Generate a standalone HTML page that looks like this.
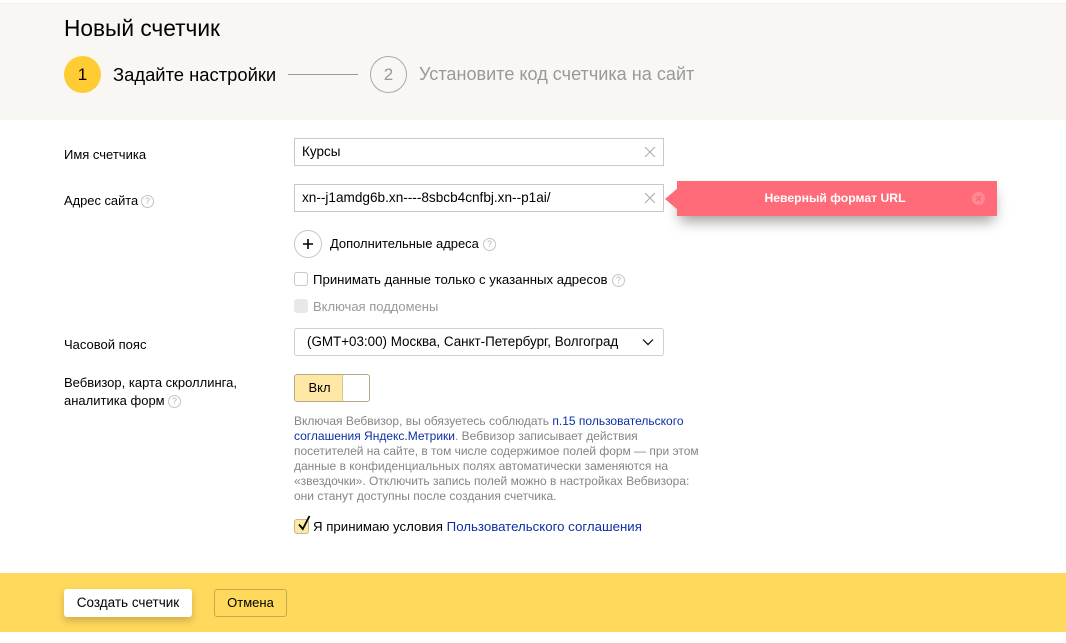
<!DOCTYPE html>
<html lang="ru">
<head>
<meta charset="utf-8">
<title>Новый счетчик</title>
<style>
html,body{margin:0;padding:0;background:#fff;}
body{width:1066px;height:643px;position:relative;overflow:hidden;font-family:"Liberation Sans","Noto Sans CJK SC",sans-serif;color:#000;}
.t{position:absolute;white-space:nowrap;font-size:13px;line-height:16px;}
.box{position:absolute;box-sizing:border-box;}
.q{position:absolute;width:13px;height:13px;box-sizing:border-box;border:1px solid #c4c4c4;border-radius:50%;color:#b5b5b5;font-size:9px;line-height:11px;text-align:center;}
a{color:#0b2fa6;text-decoration:none;}
svg{position:absolute;}
</style>
</head>
<body>
<div class="box" style="left:0;top:3px;width:1066px;height:117px;background:#f8f7f4;border-top:1px solid #eee;"></div>
<div class="t" style="left:64px;top:14px;font-size:22.7px;line-height:28px;">Новый счетчик</div>
<div class="box" style="left:64px;top:56px;width:37px;height:37px;border-radius:50%;background:#ffcc33;"></div>
<div class="t" style="left:64px;top:64px;width:37px;text-align:center;font-size:17px;line-height:21px;">1</div>
<div class="t" style="left:113px;top:64px;font-size:18.4px;line-height:21px;">Задайте настройки</div>
<div class="box" style="left:288px;top:74px;width:70px;height:1px;background:#999;"></div>
<div class="box" style="left:370px;top:56px;width:37px;height:37px;border-radius:50%;border:1px solid #aaa;"></div>
<div class="t" style="left:370px;top:64px;width:37px;text-align:center;font-size:17px;line-height:21px;color:#999;">2</div>
<div class="t" style="left:419px;top:64px;font-size:18.1px;line-height:21px;color:#999;">Установите код счетчика на сайт</div>

<div class="t" style="left:64px;top:147px;">Имя счетчика</div>
<div class="t" style="left:64px;top:193px;font-size:12.9px;">Адрес сайта</div>
<div class="q" style="left:141px;top:195px;">?</div>
<div class="t" style="left:64px;top:337px;">Часовой пояс</div>
<div class="t" style="left:64px;top:375px;">Вебвизор, карта скроллинга,</div>
<div class="t" style="left:64px;top:393px;">аналитика форм</div>
<div class="q" style="left:168px;top:395px;">?</div>

<div class="box" style="left:294px;top:138px;width:370px;height:28px;border:1px solid #c8c8c8;"></div>
<div class="t" style="left:302px;top:144px;font-size:13.5px;">Курсы</div>
<svg style="left:644px;top:146px;" width="12" height="12" viewBox="0 0 12 12"><path d="M1 1L11 11M11 1L1 11" stroke="#aaa" stroke-width="1" fill="none"/></svg>

<div class="box" style="left:294px;top:184px;width:370px;height:28px;border:1px solid #c8c8c8;"></div>
<div class="t" style="left:302px;top:190px;font-size:13.6px;">xn--j1amdg6b.xn----8sbcb4cnfbj.xn--p1ai/</div>
<svg style="left:644px;top:192px;" width="12" height="12" viewBox="0 0 12 12"><path d="M1 1L11 11M11 1L1 11" stroke="#aaa" stroke-width="1" fill="none"/></svg>

<div class="box" style="left:677px;top:181px;width:320px;height:35px;background:#ff6b78;box-shadow:0 8px 14px -3px rgba(0,0,0,.4);"></div>
<svg style="left:665px;top:188px;" width="13" height="22" viewBox="0 0 13 22"><path d="M13 0L0 11L13 22Z" fill="#ff6b78"/></svg>
<div class="t" style="left:677px;top:190px;width:316px;text-align:center;color:#fff;font-weight:bold;font-size:12.2px;">Неверный формат URL</div>
<svg style="left:971px;top:191px;" width="15" height="15" viewBox="0 0 15 15"><circle cx="7.5" cy="7.5" r="6.5" fill="#ff8a94"/><path d="M5 5L10 10M10 5L5 10" stroke="#ff6b78" stroke-width="2" fill="none"/></svg>

<div class="box" style="left:294px;top:230px;width:28px;height:28px;border-radius:50%;border:1px solid #c8c8c8;"></div>
<svg style="left:302px;top:238px;" width="12" height="12" viewBox="0 0 12 12"><path d="M6 1V11M1 6H11" stroke="#000" stroke-width="1.6" fill="none"/></svg>
<div class="t" style="left:330px;top:236px;font-size:12.95px;">Дополнительные адреса</div>
<div class="q" style="left:483px;top:238px;">?</div>

<div class="box" style="left:294px;top:272px;width:14px;height:14px;border:1px solid #c8c8c8;border-radius:3px;"></div>
<div class="t" style="left:313px;top:272px;font-size:13.2px;">Принимать данные только с указанных адресов</div>
<div class="q" style="left:612px;top:274px;">?</div>
<div class="box" style="left:294px;top:299px;width:14px;height:14px;background:#e8e8e8;border-radius:3px;"></div>
<div class="t" style="left:313px;top:299px;color:#999;">Включая поддомены</div>

<div class="box" style="left:294px;top:328px;width:370px;height:28px;border:1px solid #d0d0d0;border-radius:3px;"></div>
<div class="t" style="left:307px;top:334px;font-size:13.4px;">(GMT+03:00) Москва, Санкт-Петербург, Волгоград</div>
<svg style="left:642px;top:338px;" width="12" height="8" viewBox="0 0 12 8"><path d="M1 1.5L6 6.5L11 1.5" stroke="#000" stroke-width="1.2" fill="none"/></svg>

<div class="box" style="left:294px;top:374px;width:76px;height:28px;border:1px solid #b5a883;border-radius:3px;background:#fff;"></div>
<div class="box" style="left:295px;top:375px;width:49px;height:26px;background:#ffe8a6;border-radius:2px 0 0 2px;"></div>
<div class="box" style="left:342px;top:375px;width:27px;height:26px;background:#fff;border-left:1px solid #cfc5a5;border-radius:3px;"></div>
<div class="t" style="left:295px;top:380px;width:49px;text-align:center;">Вкл</div>

<div class="t" style="left:294px;top:414px;font-size:12px;line-height:15px;color:#858585;">Включая Вебвизор, вы обязуетесь соблюдать <a href="#">п.15 пользовательского</a></div>
<div class="t" style="left:294px;top:429px;font-size:12px;line-height:15px;color:#858585;"><a href="#">соглашения Яндекс.Метрики</a>. Вебвизор записывает действия</div>
<div class="t" style="left:294px;top:444px;font-size:11.98px;line-height:15px;color:#858585;">посетителей на сайте, в том числе содержимое полей форм — при этом</div>
<div class="t" style="left:294px;top:459px;font-size:12px;line-height:15px;color:#858585;">данные в конфиденциальных полях автоматически заменяются на</div>
<div class="t" style="left:294px;top:474px;font-size:12px;line-height:15px;color:#858585;">«звездочки». Отключить запись полей можно в настройках Вебвизора:</div>
<div class="t" style="left:294px;top:489px;font-size:12px;line-height:15px;color:#858585;">они станут доступны после создания счетчика.</div>

<div class="box" style="left:294px;top:519px;width:15px;height:15px;background:#ffe8a6;border:1px solid #c9b98a;border-radius:3px;"></div>
<svg style="left:296px;top:514px;" width="17" height="18" viewBox="0 0 17 18"><path d="M3 10.5L6.8 15L13.5 2" stroke="#000" stroke-width="1.8" fill="none"/></svg>
<div class="t" style="left:313px;top:519px;font-size:13.25px;">Я принимаю условия <a href="#">Пользовательского соглашения</a></div>

<div class="box" style="left:0;top:573px;width:1066px;height:59px;background:#ffd95c;"></div>
<div class="box" style="left:64px;top:589px;width:128px;height:28px;background:#fff;border-radius:3px;box-shadow:0 4px 8px rgba(0,0,0,.2);"></div>
<div class="t" style="left:64px;top:595px;width:128px;text-align:center;font-size:13.5px;">Создать счетчик</div>
<div class="box" style="left:214px;top:589px;width:73px;height:28px;border:1px solid #c9a94c;border-radius:3px;"></div>
<div class="t" style="left:214px;top:595px;width:73px;text-align:center;">Отмена</div>
</body>
</html>
